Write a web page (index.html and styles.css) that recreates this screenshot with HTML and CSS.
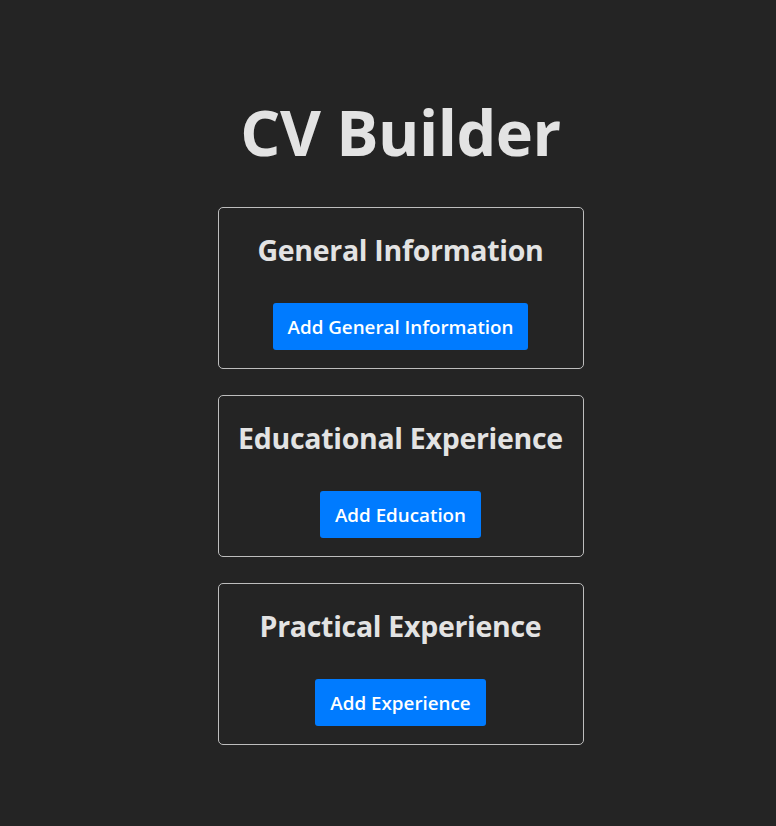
FILE: index.html
```html
<!DOCTYPE html>
<html lang="en">
<head>
<meta charset="utf-8">
<title>CV Builder</title>
<link rel="stylesheet" href="styles.css">
</head>
<body>
<main class="app">
  <h1 class="title">CV Builder</h1>
  <section class="card">
    <h2 class="card-title">General Information</h2>
    <button class="btn">Add General Information</button>
  </section>
  <section class="card">
    <h2 class="card-title">Educational Experience</h2>
    <button class="btn">Add Education</button>
  </section>
  <section class="card">
    <h2 class="card-title">Practical Experience</h2>
    <button class="btn">Add Experience</button>
  </section>
</main>
</body>
</html>
```

FILE: styles.css
```css
html, body {
  margin: 0;
  padding: 0;
  background: #242424;
}
body {
  font-family: "Open Sans", "Noto Sans", sans-serif;
  color: #e3e3e3;
}
.app {
  display: flex;
  flex-direction: column;
  align-items: center;
  gap: 26px;
  padding-top: 92px;
  padding-left: 25px;
}
.title {
  margin: 0 0 9px;
  font-size: 63px;
  font-weight: 700;
  line-height: 80px;
  letter-spacing: -0.5px;
  color: #e3e3e3;
}
.card {
  box-sizing: border-box;
  width: 366px;
  height: 162px;
  border: 1px solid #bdbdbd;
  border-radius: 5px;
  display: flex;
  flex-direction: column;
  align-items: center;
  padding-top: 21px;
}
.card-title {
  margin: 0;
  font-size: 28.5px;
  font-weight: 700;
  line-height: 42px;
  letter-spacing: -0.3px;
}
.btn {
  margin-top: 32px;
  height: 47px;
  padding: 0 15px;
  border: none;
  border-radius: 3px;
  background: #007bff;
  color: #fff;
  font-family: inherit;
  font-size: 18.8px;
  font-weight: 600;
}
```
